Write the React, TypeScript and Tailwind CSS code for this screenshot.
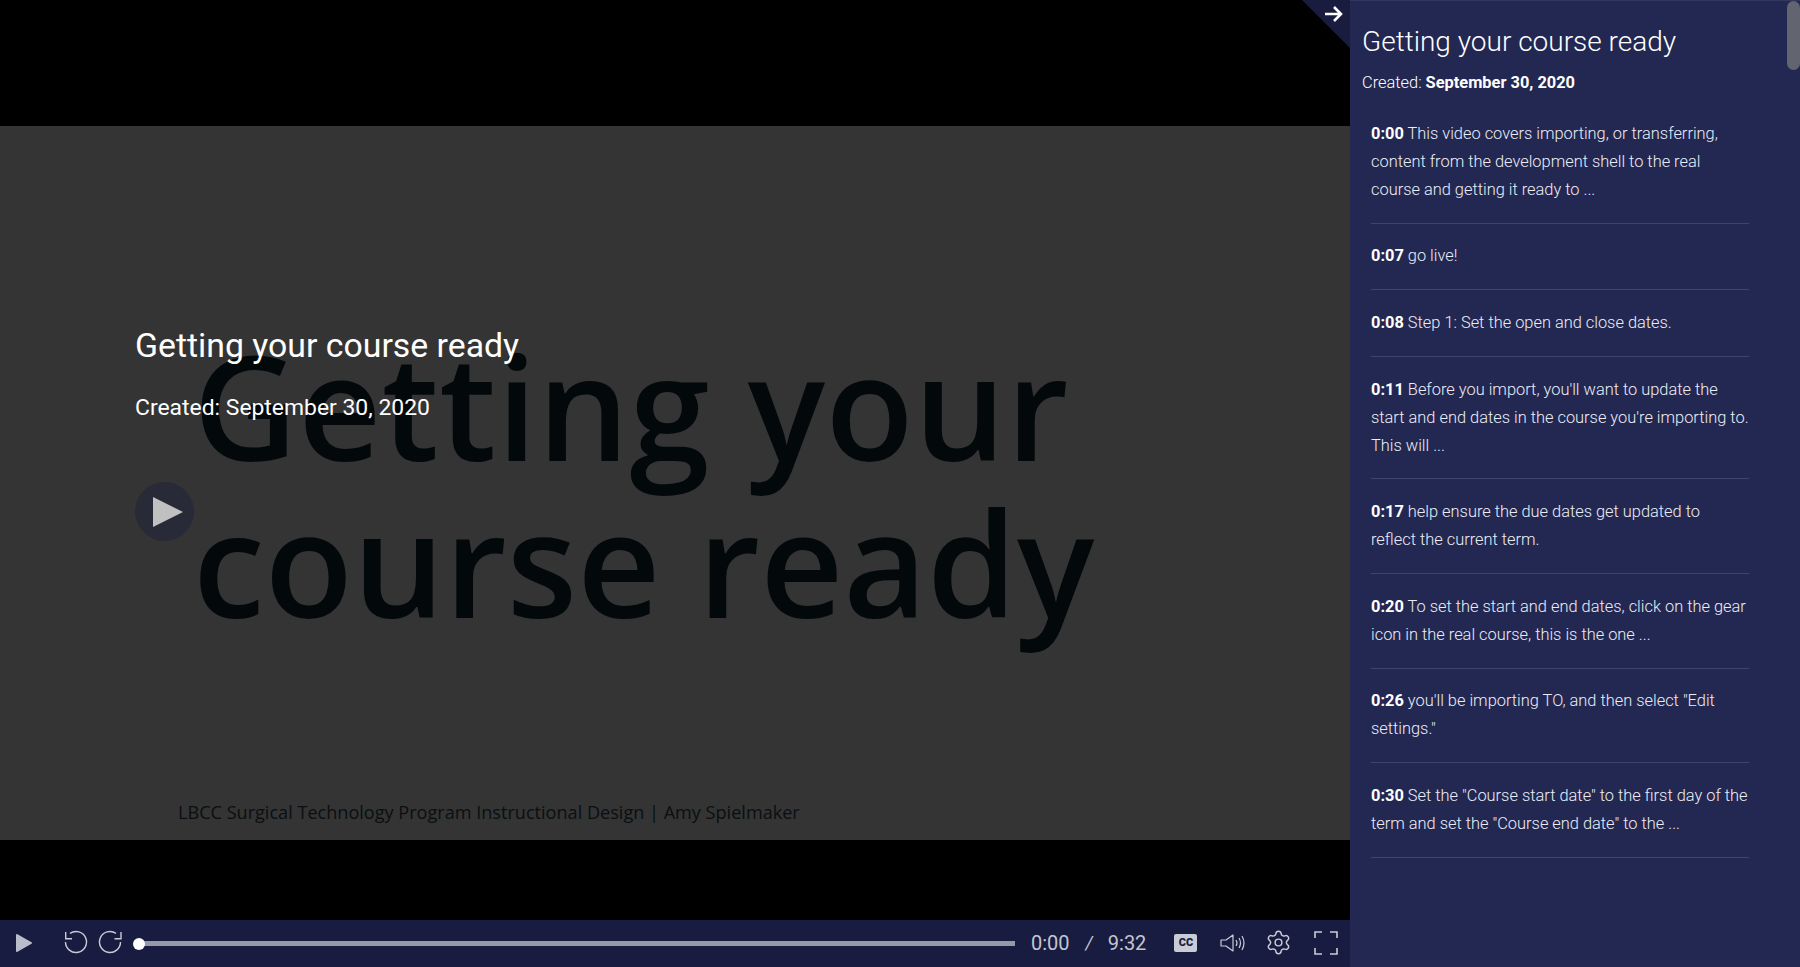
import { Settings } from "lucide-react";

const lines = [
  { time: "0:00", text: "This video covers importing, or transferring, content from the development shell to the real course and getting it ready to ..." },
  { time: "0:07", text: "go live!" },
  { time: "0:08", text: "Step 1: Set the open and close dates." },
  { time: "0:11", text: "Before you import, you'll want to update the start and end dates in the course you're importing to. This will ..." },
  { time: "0:17", text: "help ensure the due dates get updated to\nreflect the current term." },
  { time: "0:20", text: "To set the start and end dates, click on the gear icon in the real course, this is the one ..." },
  { time: "0:26", text: "you'll be importing TO, and then select \"Edit settings.\"" },
  { time: "0:30", text: "Set the \"Course start date\" to the first day of the term and set the \"Course end date\" to the ..." },
];

const App = () => {
  return (
    <main className="flex h-[967px] w-[1800px] overflow-hidden bg-black font-['Roboto',sans-serif] text-white">
      {/* Player */}
      <section className="flex w-[1350px] flex-col">
        <div className="h-[126px] bg-black" />
        <div className="relative h-[714px] bg-[#343434]">
          <div className="absolute left-[193px] top-[201px] font-['Open_Sans',sans-serif] text-[144.4px] font-semibold leading-[157px] text-[#03090b]">
            <p className="whitespace-nowrap tracking-[0.4px]">Getting your</p>
            <p className="whitespace-nowrap">course ready</p>
          </div>
          <p className="absolute left-[178px] top-[672px] font-['Open_Sans',sans-serif] text-[18.1px] leading-[28px] text-[#0a0f12]">
            LBCC Surgical Technology Program Instructional Design | Amy Spielmaker
          </p>
          <h2 className="absolute left-[135px] top-[200px] text-[33.8px] leading-[40px]">Getting your course ready</h2>
          <p className="absolute left-[135px] top-[267px] text-[22.9px] leading-[30px]">Created: September 30, 2020</p>
          <div className="absolute left-[135px] top-[356px] flex h-[59px] w-[59px] items-center justify-center rounded-full bg-[#282a37]">
            <svg width="30" height="32" viewBox="0 0 30 32" className="ml-[7px]">
              <path d="M0 1 L30 16 L0 31 Z" fill="#c0c0c0" />
            </svg>
          </div>
        </div>
        <div className="h-[80px] bg-black" />

        {/* Controls */}
        <div className="flex h-[47px] items-center bg-[#181c40] pb-[2px] text-[#c3c6d2]">
          <svg width="18" height="20" viewBox="0 0 18 20" className="ml-[15px]">
            <path d="M2 2 L16 10 L2 18 Z" fill="#b9bccb" stroke="#b9bccb" strokeWidth="2" strokeLinejoin="round" />
          </svg>
          <svg width="26" height="26" viewBox="0 0 26 26" fill="none" stroke="#c9cbd6" strokeWidth="1.4" className="ml-[29px]">
            <path d="M8 3.4 A10.5 10.5 0 1 1 3.5 12" />
            <path d="M3.7 2 V8.8 H10" />
          </svg>
          <svg width="26" height="26" viewBox="0 0 26 26" fill="none" stroke="#c9cbd6" strokeWidth="1.4" className="ml-[8px]">
            <path d="M20 3.4 A10.5 10.5 0 1 0 24.5 12" />
            <path d="M25 2 V8.8 H18.5" />
          </svg>
          <div className="relative ml-[12px] flex h-[5px] w-[881px] translate-y-[1px] items-center bg-[#9699aa]">
            <span className="absolute -left-[1px] h-[12px] w-[12px] rounded-full bg-white" />
          </div>
          <span className="ml-[16px] text-[20px]">0:00</span>
          <span className="ml-[16px] text-[18px] italic">/</span>
          <span className="ml-[15px] text-[20px]">9:32</span>
          <span className="ml-[28px] flex h-[18px] w-[23px] items-center justify-center rounded-[2px] bg-[#c9cbd6] text-[11px] font-black leading-none text-[#181c40]">
            CC
          </span>
          <svg width="26" height="22" viewBox="0 0 26 22" fill="none" stroke="#c9cbd6" strokeWidth="1.2" className="ml-[23px]">
            <path d="M1 8 H6 L13 3 V19 L6 14 H1 Z" strokeLinejoin="round" />
            <path d="M16 8 Q18 11 16 14" />
            <path d="M19 6 Q22 11 19 16" />
            <path d="M22 4 Q26 11 22 18" />
          </svg>
          <Settings size={27} strokeWidth={1.3} className="ml-[19px] text-[#c9cbd6]" />
          <svg width="24" height="24" viewBox="0 0 24 24" fill="none" stroke="#c9cbd6" strokeWidth="1.6" className="ml-[22px]">
            <path d="M1 7 V1 H8 M16 1 H23 V7 M23 17 V23 H16 M8 23 H1 V17" />
          </svg>
        </div>
      </section>

      {/* Transcript */}
      <aside className="relative flex w-[450px] border-t border-[#33385f] bg-[#232853]">
        <div className="absolute right-full -top-px h-0 w-0 border-l-[48px] border-t-[48px] border-l-transparent border-t-[#191c3f]" />
        <svg width="20" height="18" viewBox="0 0 20 18" fill="none" stroke="white" strokeWidth="2.6" className="absolute -left-[26px] top-[4px]">
          <path d="M1 9 H17 M10 2 L17 9 L10 16" />
        </svg>
        <div className="flex-1 pl-3 pt-[23px]">
          <h1 className="text-[28px] font-light leading-[36px]">Getting your course ready</h1>
          <p className="mt-[10px] text-[16.4px] font-light leading-[26px]">
            Created: <b className="font-bold">September 30, 2020</b>
          </p>
          <ul className="ml-[9px] mt-[5px] w-[378px]">
            {lines.map((l) => (
              <li key={l.time} className="border-b border-[#3e4370] py-[18.8px] text-[16.4px] font-light leading-[28px] text-[#ecedf3]">
                <div className="-mr-[3px] whitespace-pre-line">
                  <b className="font-bold text-white">{l.time}</b> {l.text}
                </div>
              </li>
            ))}
          </ul>
        </div>
        <div className="w-[14px]">
          <div className="ml-[1px] h-[69px] w-[13px] rounded-full bg-[#62656f]" />
        </div>
      </aside>
    </main>
  );
};

export default App;
